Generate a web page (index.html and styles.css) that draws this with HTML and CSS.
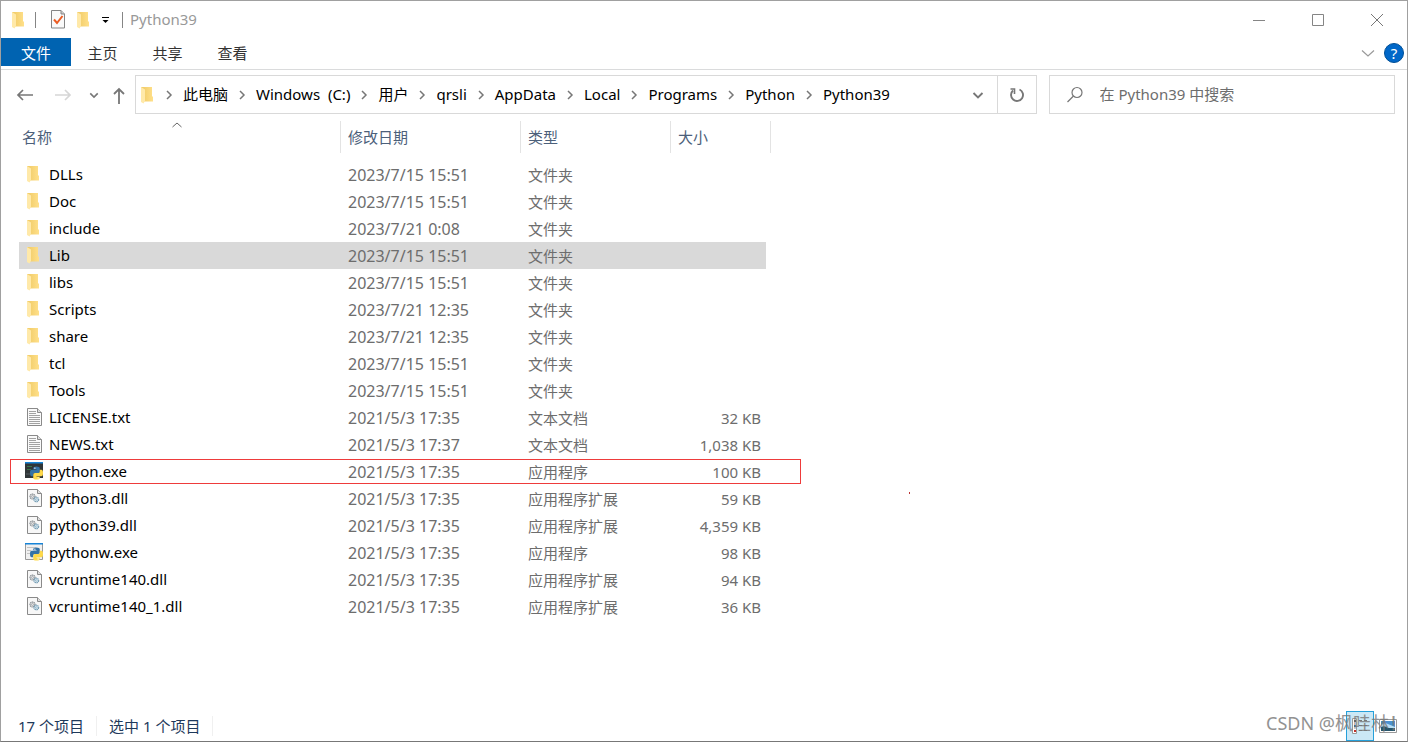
FILE: index.html
```html
<!DOCTYPE html>
<html lang="zh-CN">
<head>
<meta charset="utf-8">
<title>Python39</title>
<link rel="stylesheet" href="styles.css">
</head>
<body>
<svg class="symbols" aria-hidden="true">
  <linearGradient id="gold" x1="0" x2="1"><stop offset="0" stop-color="#efc964"/><stop offset="1" stop-color="#ffe08a"/></linearGradient>
  <symbol id="folder" viewBox="0 0 18 18">
    <path d="M2 1H13V10L14 11V15.500H4Z" fill="url(#gold)"/>
    <path d="M2 1L6 3.500V15L4.500 17.500L2 16Z" fill="#ffe9a9"/>
  </symbol>
  <symbol id="text" viewBox="0 0 18 18">
    <path d="M2.500.5H12.500L16.500 4.500V17.500H2.500Z" fill="#fafafa" stroke="#8a8a8a"/>
    <path d="M12.500.5V4.500H16.500" fill="#ddd" stroke="#8a8a8a"/>
    <path d="M4 3.500H11M4 5.500H11M4 7.500H15M4 9.500H15M4 11.500H15M4 13.500H15M4 15.500H15" stroke="#a2a2a2" fill="none"/>
  </symbol>
  <symbol id="dll" viewBox="0 0 18 18">
    <path d="M2.500.5H12.500L16.500 4.500V17.500H2.500Z" fill="#f7f7f7" stroke="#8a8a8a"/>
    <path d="M12.500.5V4.500H16.500" fill="#ddd" stroke="#8a8a8a"/>
    <circle cx="7.500" cy="7.500" r="2.500" fill="#ddd" stroke="#858b90" stroke-width="1.200" stroke-dasharray="1.300 .5"/>
    <circle cx="7.500" cy="7.500" r=".9" fill="#fff" stroke="#858b90" stroke-width=".6"/>
    <circle cx="11.300" cy="10.500" r="2.300" fill="#dcecf5" stroke="#6f98b0" stroke-width="1.200" stroke-dasharray="1.300 .5"/>
    <circle cx="11.300" cy="10.500" r=".8" fill="#fff" stroke="#6f98b0" stroke-width=".6"/>
  </symbol>
  <symbol id="snake" viewBox="0 0 12 12">
    <path d="M3 3V1.500Q3 0 6 0T9 1.500V5Q9 6 7.500 6H4.500Q3 6 3 7.500V9H1.500Q0 9 0 6T1.500 3H6V2.500H3Z" fill="#3572a5"/>
    <path d="M9 3H10.500Q12 3 12 6T10.500 9H6V9.500H9V10.500Q9 12 6 12T3 10.500V7.500Q3 6 4.500 6H7.500Q9 6 9 4.500Z" fill="#ffd94a"/>
    <circle cx="4.500" cy="1.500" r=".6" fill="#fff"/><circle cx="7.500" cy="10.500" r=".6" fill="#fff"/>
  </symbol>
  <symbol id="console" viewBox="0 0 18 18">
    <path d="M0 0H18V16H0Z" fill="#303638"/><path d="M0 0H18V1.500H0Z" fill="#1684d8"/>
    <path d="M2 4.500H7M2 7.500H6" stroke="#397548" fill="none"/><path d="M1 12H5" stroke="#525b60"/>
    <use href="#snake" x="5" y="4" width="13" height="14"/>
  </symbol>
  <symbol id="windowed" viewBox="0 0 18 18">
    <path d="M.5 .5H17.500V16.500H.5Z" fill="#f0f0f0" stroke="#999"/><path d="M0 0H18V1.500H0Z" fill="#1684d8"/>
    <path d="M2 4.500H11M2 7.500H6M2 10.500H5" stroke="#c3c3c3" fill="none"/>
    <use href="#snake" x="5" y="4" width="13" height="14"/>
  </symbol>
  <symbol id="chevron" viewBox="0 0 10 10"><path d="M3 1L7 5L3 9" fill="none" stroke="#777" stroke-width="1.500"/></symbol>
  <symbol id="down" viewBox="0 0 12 12"><path d="M1.500 4L6 8.500L10.500 4" fill="none" stroke="currentColor" stroke-width="1.900"/></symbol>
</svg>
<div class="window">
  <header class="titlebar">
    <svg class="icon" aria-hidden="true"><use href="#folder"/></svg>
    <span class="rule"></span>
    <button class="quick" aria-label="属性"><svg width="16" height="19" viewBox="0 0 16 19"><path d="M1.500.5H11L14.500 4V18H1.500Z" fill="#fafafa" stroke="#858585"/><path d="M11 .5V4H14.500" fill="#ccc" stroke="#858585"/><path d="M4 9.500L7 13L12.500 6" fill="none" stroke="#eb5c23" stroke-width="2"/></svg></button>
    <button class="quick" aria-label="新建文件夹"><svg class="icon"><use href="#folder"/></svg></button>
    <button class="quick customize" aria-label="自定义快速访问工具栏"><svg width="8" height="8" viewBox="0 0 8 8"><path d="M0 1.500H7" stroke="#000"/><path d="M.5 4H6.500L3.500 7Z" fill="#000"/></svg></button>
    <span class="rule"></span>
    <h1 class="title">Python39</h1>
    <div class="captions">
      <button aria-label="最小化"><svg width="14" height="14" viewBox="0 0 14 14"><path d="M1 7.500H13" stroke="#858585"/></svg></button>
      <button aria-label="最大化"><svg width="14" height="14" viewBox="0 0 14 14"><path d="M1.500 1.500H12.500V12.500H1.500Z" fill="none" stroke="#858585"/></svg></button>
      <button aria-label="关闭"><svg width="14" height="14" viewBox="0 0 14 14"><path d="M1 1L13 13M13 1L1 13" fill="none" stroke="#777"/></svg></button>
    </div>
  </header>
  <div class="ribbon">
    <button class="tab file">文件</button><button class="tab">主页</button><button class="tab">共享</button><button class="tab">查看</button>
    <button class="expand" aria-label="展开功能区"><svg width="14" height="14" viewBox="0 0 14 14"><path d="M1 4.500L7 10L13 4.500" fill="none" stroke="#999" stroke-width="1.200"/></svg></button>
    <button class="help" aria-label="帮助">?</button>
  </div>
  <div class="navigation">
    <div class="arrows">
      <button aria-label="后退"><svg width="18" height="18" viewBox="0 0 18 18"><path d="M17 9H2M7 4L2 9L7 14" fill="none" stroke="#777" stroke-width="1.700"/></svg></button>
      <button aria-label="前进"><svg width="18" height="18" viewBox="0 0 18 18"><path d="M1 9H16M11 4L16 9L11 14" fill="none" stroke="#d6d6d6" stroke-width="1.700"/></svg></button>
      <button class="recent" aria-label="最近位置"><svg width="10" height="10"><use href="#down"/></svg></button>
      <button class="up" aria-label="上移"><svg width="14" height="18" viewBox="0 0 14 18"><path d="M7 17V2M2 7L7 2L12 7" fill="none" stroke="#777" stroke-width="1.800"/></svg></button>
    </div>
    <nav class="address" aria-label="地址">
      <svg class="icon" aria-hidden="true"><use href="#folder"/></svg>
      <svg class="sep"><use href="#chevron"/></svg><a href="#">此电脑</a>
      <svg class="sep"><use href="#chevron"/></svg><a href="#">Windows&nbsp; (C:)</a>
      <svg class="sep"><use href="#chevron"/></svg><a href="#">用户</a>
      <svg class="sep"><use href="#chevron"/></svg><a href="#">qrsli</a>
      <svg class="sep"><use href="#chevron"/></svg><a href="#">AppData</a>
      <svg class="sep"><use href="#chevron"/></svg><a href="#">Local</a>
      <svg class="sep"><use href="#chevron"/></svg><a href="#">Programs</a>
      <svg class="sep"><use href="#chevron"/></svg><a href="#">Python</a>
      <svg class="sep"><use href="#chevron"/></svg><a href="#">Python39</a>
      <button class="history" aria-label="以前的位置"><svg width="12" height="12"><use href="#down"/></svg></button>
      <button class="refresh" aria-label="刷新"><svg width="16" height="16" viewBox="0 0 16 16"><path d="M10.500 2.500A6 6 0 1 1 4 3.500" fill="none" stroke="#777" stroke-width="1.900"/><path d="M1.500 2H5.500V7" fill="none" stroke="#777" stroke-width="1.600"/></svg></button>
    </nav>
    <label class="search">
      <svg width="18" height="18" viewBox="0 0 18 18" aria-hidden="true"><circle cx="11" cy="6.500" r="5" fill="none" stroke="#777" stroke-width="1.200"/><path d="M7.500 10L1.500 16" stroke="#777" stroke-width="1.300"/></svg>
      <input type="search" aria-label="搜索" placeholder="在 Python39 中搜索">
    </label>
  </div>
  <main class="listing">
    <svg class="sort" viewBox="0 0 12 6" aria-hidden="true"><path d="M1.500 5L6 1L10.500 5" fill="none" stroke="#666"/></svg>
    <table class="files">
      <colgroup><col class="c-name"><col class="c-date"><col class="c-type"><col class="c-size"><col class="c-end"></colgroup>
      <thead><tr><th>名称</th><th>修改日期</th><th>类型</th><th colspan="2">大小</th></tr></thead>
      <tbody>
        <tr><td><svg class="icon"><use href="#folder"/></svg>DLLs</td><td>2023/7/15 15:51</td><td>文件夹</td><td></td></tr>
        <tr><td><svg class="icon"><use href="#folder"/></svg>Doc</td><td>2023/7/15 15:51</td><td>文件夹</td><td></td></tr>
        <tr><td><svg class="icon"><use href="#folder"/></svg>include</td><td>2023/7/21 0:08</td><td>文件夹</td><td></td></tr>
        <tr class="selected"><td><svg class="icon"><use href="#folder"/></svg>Lib</td><td>2023/7/15 15:51</td><td>文件夹</td><td></td></tr>
        <tr><td><svg class="icon"><use href="#folder"/></svg>libs</td><td>2023/7/15 15:51</td><td>文件夹</td><td></td></tr>
        <tr><td><svg class="icon"><use href="#folder"/></svg>Scripts</td><td>2023/7/21 12:35</td><td>文件夹</td><td></td></tr>
        <tr><td><svg class="icon"><use href="#folder"/></svg>share</td><td>2023/7/21 12:35</td><td>文件夹</td><td></td></tr>
        <tr><td><svg class="icon"><use href="#folder"/></svg>tcl</td><td>2023/7/15 15:51</td><td>文件夹</td><td></td></tr>
        <tr><td><svg class="icon"><use href="#folder"/></svg>Tools</td><td>2023/7/15 15:51</td><td>文件夹</td><td></td></tr>
        <tr><td><svg class="icon"><use href="#text"/></svg>LICENSE.txt</td><td>2021/5/3 17:35</td><td>文本文档</td><td>32 KB</td></tr>
        <tr><td><svg class="icon"><use href="#text"/></svg>NEWS.txt</td><td>2021/5/3 17:37</td><td>文本文档</td><td>1,038 KB</td></tr>
        <tr><td><svg class="icon"><use href="#console"/></svg>python.exe</td><td>2021/5/3 17:35</td><td>应用程序</td><td>100 KB</td></tr>
        <tr><td><svg class="icon"><use href="#dll"/></svg>python3.dll</td><td>2021/5/3 17:35</td><td>应用程序扩展</td><td>59 KB</td></tr>
        <tr><td><svg class="icon"><use href="#dll"/></svg>python39.dll</td><td>2021/5/3 17:35</td><td>应用程序扩展</td><td>4,359 KB</td></tr>
        <tr><td><svg class="icon"><use href="#windowed"/></svg>pythonw.exe</td><td>2021/5/3 17:35</td><td>应用程序</td><td>98 KB</td></tr>
        <tr><td><svg class="icon"><use href="#dll"/></svg>vcruntime140.dll</td><td>2021/5/3 17:35</td><td>应用程序扩展</td><td>94 KB</td></tr>
        <tr><td><svg class="icon"><use href="#dll"/></svg>vcruntime140_1.dll</td><td>2021/5/3 17:35</td><td>应用程序扩展</td><td>36 KB</td></tr>
      </tbody>
    </table>
    <span class="marker"></span>
    <span class="speck"></span>
  </main>
  <footer class="status">
    <span class="count">17 个项目</span><span class="count">选中 1 个项目</span>
    <div class="views">
      <button class="active" aria-label="详细信息"><svg width="18" height="18" viewBox="0 0 18 18"><path d="M1.500 1.500H5.500V16.500H1.500Z" fill="#fff" stroke="#999"/><path d="M3 3H5V5H3Z" fill="#555"/><path d="M3 8H5V10H3Z" fill="#2b70b5"/><path d="M3 13H5V15H3Z" fill="#c3312a"/><path d="M8 3.500H11M13 3.500H16M8 8.500H11M13 8.500H16M8 13.500H11M13 13.500H16" stroke="#777"/></svg></button>
      <button aria-label="大缩略图"><svg width="18" height="14" viewBox="0 0 18 14"><path d="M.5.5H17.500V13.500H.5Z" fill="#fff" stroke="#999"/><path d="M2 2H16V12H2Z" fill="#4b91d0"/><path d="M2 6Q6 3 9 5L16 8V10H2Z" fill="#b9def2"/><path d="M2 8Q6 6 9 9H16V12H2Z" fill="#28566c"/></svg></button>
    </div>
    <span class="watermark">CSDN @枫哇林！</span>
  </footer>
</div>
</body>
</html>
```
FILE: styles.css
```css
* { box-sizing: border-box; }
body {
  margin: 0;
  font: 15px/20px "Noto Sans", "Noto Sans CJK SC", sans-serif;
  color: #000;
}
button {
  display: flex;
  align-items: center;
  justify-content: center;
  border: 0;
  padding: 0;
  background: none;
  font: inherit;
  color: #777;
}
a { color: inherit; text-decoration: none; white-space: nowrap; }
svg { flex: none; }
.symbols { position: absolute; width: 0; height: 0; }
.icon { width: 18px; height: 18px; }
.window {
  display: flex;
  flex-direction: column;
  min-height: 100vh;
  border: 1px solid #a0a0a0;
  border-bottom-color: #777;
  background: #fff;
}

.titlebar { display: flex; align-items: center; height: 37px; padding-left: 9px; }
.rule { width: 1px; height: 16px; margin: 0 7px; background: #858585; }
.quick { width: 26px; height: 24px; }
.titlebar .icon + .rule { margin-right: 9px; }
.customize { width: 18px; }
.title { margin: 0; padding-bottom: 2px; font-size: 15px; font-weight: 400; color: #999; }
.captions { display: flex; margin-left: auto; }
.captions button { width: 59px; height: 35px; }
.captions button:last-child { width: 60px; }

.ribbon { display: flex; height: 32px; padding-right: 3px; border-bottom: 1px solid #dadbdc; }
.tab { width: 65px; height: 28px; padding: 2px 2px 0 0; color: #333; }
.tab.file { width: 70px; padding-right: 0; background: #0063b1; color: #fff; }
.expand { width: 32px; height: 30px; margin-left: auto; }
.help {
  width: 20px;
  height: 20px;
  margin-top: 5px;
  border: 1px solid #004f96;
  border-radius: 50%;
  background: #0067c8;
  color: #fff;
}

.navigation { display: flex; height: 49px; padding: 5px 12px 5px 8px; }
.arrows { display: flex; width: 126px; }
.arrows button { width: 32px; }
.arrows button:nth-child(2) { width: 44px; }
.arrows .recent { width: 17px; }
.arrows .up { width: 33px; padding-top: 3px; }
.address { display: flex; flex: 1; align-items: center; border: 1px solid #d9d9d9; }
.address a { padding-bottom: 2px; }
.address .icon { margin: 0 4px 0 3px; }
.sep { width: 10px; height: 10px; margin: 0 9px; }
.address .icon + .sep { margin-left: 3px; }
.history { width: 37px; margin-left: auto; }
.refresh { align-self: stretch; width: 39px; border-left: 1px solid #d9d9d9; }
.search {
  display: flex;
  width: 25%;
  align-items: center;
  gap: 16px;
  margin-left: 12px;
  padding: 0 16px;
  border: 1px solid #d9d9d9;
}
.search input { flex: 1; min-width: 0; border: 0; padding: 0 0 2px; background: none; font: inherit; outline: 0; }
.search input::placeholder { color: #6d6d6d; opacity: 1; }

.listing { position: relative; flex: 1; padding: 2px 18px 0; }
.sort { position: absolute; left: 170px; top: 3px; width: 12px; height: 6px; }
.files { width: 752px; table-layout: fixed; border-collapse: separate; border-spacing: 0; }
.c-name { width: 322px; }
.c-date { width: 180px; }
.c-type { width: 150px; }
.c-size { width: 95px; }
.c-end { width: 5px; }
.files th {
  height: 32px;
  padding: 0 0 0 7px;
  border-right: 1px solid #e3e3e3;
  font-weight: 400;
  text-align: left;
  color: #4c607a;
}
.files th:first-child { padding-left: 3px; }
.files tbody::before { content: ""; display: block; height: 8px; }
.files td { height: 27px; padding: 0 0 0 7px; color: #6d6d6d; white-space: nowrap; }
.files td:first-child { padding: 3px 0 0 6px; color: #000; }
.files td:nth-child(2) { font-size: 16px; }
.files td:nth-child(4) { padding-right: 5px; text-align: right; }
.files td .icon { margin: 0 6px 5px 0; vertical-align: middle; }
.selected td { background: #d9d9d9; }
.marker { position: absolute; left: 9px; top: 340px; width: 791px; height: 25px; border: 1px solid #ee3b3b; }
.speck { position: absolute; left: 908px; top: 373px; width: 1px; height: 2px; background: #b33; }

.status { position: relative; display: flex; align-items: center; height: 30px; padding: 0 5px 0 17px; color: #1e395b; }
.count { padding-right: 12px; margin-right: 12px; border-right: 1px solid #f0f0f0; }
.views { display: flex; margin-left: auto; }
.views button { width: 28px; height: 30px; }
.views .active { border: 1px solid #26a0da; background: #cbe8f6; }
.watermark { position: absolute; right: 0; top: 0; font-size: 18px; line-height: 24px; color: #777; opacity: .8; }
```
